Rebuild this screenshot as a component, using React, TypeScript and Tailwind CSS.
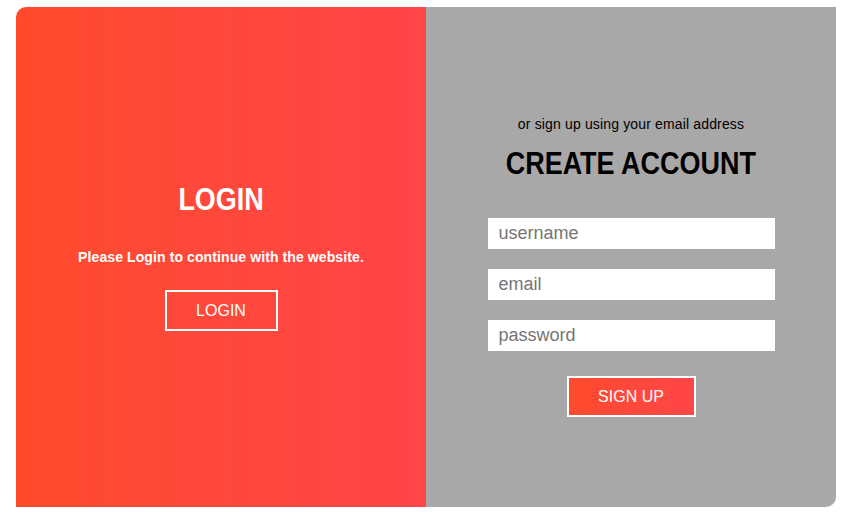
export default function App() {
  return (
    <div className="w-[851px] h-[515px] bg-white pt-[7px] pl-4">
      <div className="flex w-[820px] h-[500px]">
        {/* Left panel */}
        <div className="w-[410px] h-full rounded-tl-[10px] bg-gradient-to-r from-[#ff4b2b] to-[#ff4548] flex flex-col items-center justify-center pb-[4px] text-white">
          <h1 className="font-['Liberation_Sans',sans-serif] font-bold text-[31px] leading-[36px] scale-x-[0.87] mt-[3px]">
            LOGIN
          </h1>
          <p className="font-['Liberation_Sans',sans-serif] font-bold text-[14px] tracking-[0.1px] mt-[29px]">
            Please Login to continue with the website.
          </p>
          <button className="mt-[22px] w-[113px] h-[41px] border-2 border-white font-['Liberation_Sans',sans-serif] text-[16px]">
            LOGIN
          </button>
        </div>

        {/* Right panel */}
        <div className="w-[410px] h-full rounded-br-[10px] bg-[#a8a8a8] flex flex-col items-center pt-[107px]">
          <p className="font-['Liberation_Sans',sans-serif] text-[14px] tracking-[0.15px] text-black">
            or sign up using your email address
          </p>
          <h1 className="font-['Liberation_Sans',sans-serif] font-bold text-[31px] leading-[36px] scale-x-[0.87] text-black mt-[11px]">
            CREATE ACCOUNT
          </h1>
          <div className="flex flex-col gap-5 mt-[36px]">
            <input
              className="w-[287px] h-[31px] bg-white px-[11px] font-['Liberation_Sans',sans-serif] text-[18px] placeholder-[#757575] outline-none"
              placeholder="username"
            />
            <input
              className="w-[287px] h-[31px] bg-white px-[11px] font-['Liberation_Sans',sans-serif] text-[18px] placeholder-[#757575] outline-none"
              placeholder="email"
            />
            <input
              className="w-[287px] h-[31px] bg-white px-[11px] font-['Liberation_Sans',sans-serif] text-[18px] placeholder-[#757575] outline-none"
              placeholder="password"
            />
          </div>
          <button className="mt-[25px] w-[129px] h-[41px] border-2 border-white bg-gradient-to-r from-[#ff4b2b] to-[#ff4548] text-white font-['Liberation_Sans',sans-serif] text-[16px]">
            SIGN UP
          </button>
        </div>
      </div>
    </div>
  );
}
